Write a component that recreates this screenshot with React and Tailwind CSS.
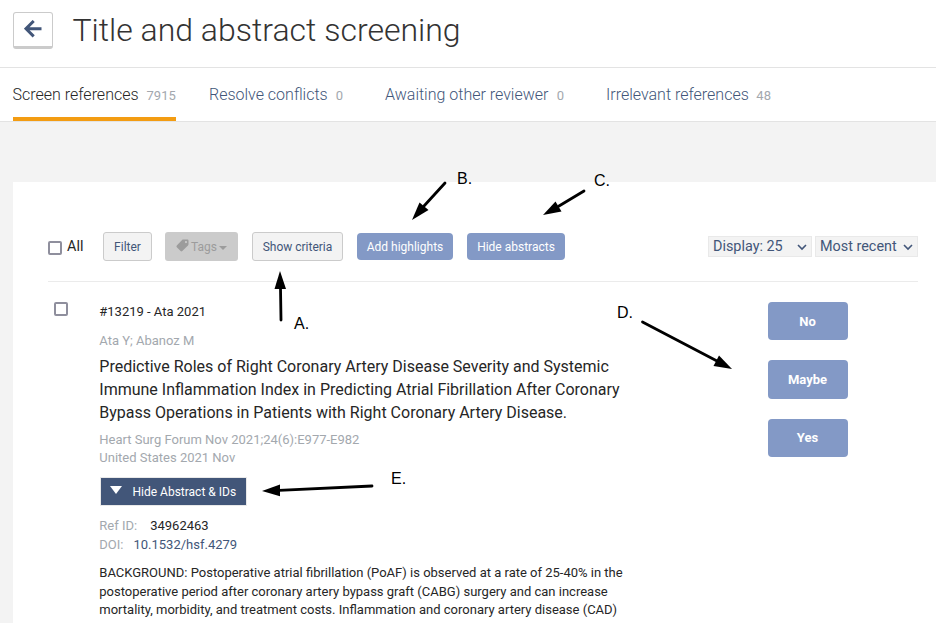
import React from "react";

const tabs = [
  { label: "Screen references", count: "7915", box: "w-[163.3px] mr-[33.2px]", active: true },
  { label: "Resolve conflicts", count: "0", box: "w-[134px] mr-[42px]" },
  { label: "Awaiting other reviewer", count: "0", box: "w-[179px] mr-[42px]" },
  { label: "Irrelevant references", count: "48", box: "w-[165px]" },
];

const notes = [
  { text: "A.", pos: "left-[294px] top-[315px]" },
  { text: "B.", pos: "left-[457px] top-[170px]" },
  { text: "C.", pos: "left-[594px] top-[172px]" },
  { text: "D.", pos: "left-[617px] top-[304px]" },
  { text: "E.", pos: "left-[391px] top-[470px]" },
];

const arrows = [
  { line: "M281 320L280.5 288", head: "280,271 286,289 274.5,289" },
  { line: "M445 183L424 206", head: "412,220 419.5,202.5 428.5,210" },
  { line: "M584 191L559 206", head: "543,215 555.5,201.5 561.5,211.5" },
  { line: "M642.5 322L717 361", head: "732,369 719,355.5 713.5,366" },
  { line: "M372 486L279 490.3", head: "262,491 280,484.5 280,496.3" },
];

function Checkbox({ className }) {
  return <span className={`block size-[14px] shrink-0 rounded-[2px] border-2 border-[#8f8f9d] bg-white ${className}`} />;
}

function Select({ children, className }) {
  return (
    <button className={`flex h-[21px] items-center justify-between border border-[#e9e9e9] bg-[#f3f3f3] pl-1 pr-[4px] text-[14.4px] leading-none text-[#425679] ${className}`}>
      <span className="pt-px">{children}</span>
      <svg width="10" height="8" viewBox="0 0 10 8" fill="none" stroke="currentColor" strokeWidth="1.6">
        <path d="M1 2l4 4 4-4" />
      </svg>
    </button>
  );
}

function Vote({ children, className }) {
  return (
    <button className={`w-20 rounded-[4px] bg-[#8399c6] pr-px text-[13px] font-bold text-white ${className}`}>{children}</button>
  );
}

export default function App() {
  return (
    <div className="relative flex h-[623px] w-[936px] flex-col overflow-hidden bg-[#f3f3f3] font-['Roboto',sans-serif] text-[#262626]">
      <header className="flex h-[68px] shrink-0 items-start border-b border-[#e3e3e3] bg-white pl-[13px] pt-3">
        <button className="flex h-[37px] w-10 justify-center rounded-[3px] border border-b-[3px] border-[#cbcbcb] pt-[7px]">
          <svg width="18" height="18" viewBox="0 0 18 18" fill="none" stroke="#425679" strokeWidth="3">
            <path d="M17.5 8.7H3M9.7 1L2 8.7L9.7 16.4" />
          </svg>
        </button>
        <h1 className="ml-[19.4px] text-[32px] font-light leading-9 text-[#333]">Title and abstract screening</h1>
      </header>

      <nav className="flex h-[54px] shrink-0 border-b border-[#e3e3e3] bg-white pl-[12.5px]">
        {tabs.map((t) => (
          <a key={t.label} className={`flex h-[53px] items-baseline justify-between whitespace-nowrap pt-[15px] text-base font-light ${t.active ? "border-b-4 border-[#f39c12] text-[#262626]" : "text-[#425679]"} ${t.box}`}>
            {t.label}
            <span className="text-[13px] font-normal text-[#a3a8ae]">{t.count}</span>
          </a>
        ))}
      </nav>

      <main className="ml-[13px] mt-[60px] flex-1 bg-white pl-[35px] pr-[18px] pt-[50px]">
        <div className="flex h-[50px] items-start border-b border-[#ebebeb] text-xs">
          <div className="flex w-[55px] items-start pt-[5px]">
            <Checkbox className="mt-1" />
            <span className="ml-[5px] text-[14.4px] leading-5">All</span>
          </div>
          <button className="h-[29px] w-[49px] rounded-[3px] border border-[#cbcbcb] bg-[#f3f3f3] text-[#425679]">Filter</button>
          <button className="ml-[13px] flex h-[29px] w-[73px] items-center justify-center rounded-[3px] bg-[#cbcbcb] text-[#9c9c9c]">
            <svg width="13" height="13" viewBox="0 0 13 13" className="mb-[3px] mr-[2px]" fill="currentColor">
              <path fillRule="evenodd" d="M7.2.6h4.2c.7 0 1.1.5 1.1 1.1v3.6c0 .4-.2.8-.5 1.1L6.3 12c-.6.5-1.2.5-1.7 0L.8 8.2c-.5-.5-.5-1.1 0-1.7L6.1 1c.3-.3.7-.4 1.1-.4zM10 2a1.1 1.1 0 1 0 0 2.2A1.1 1.1 0 0 0 10 2z" />
            </svg>
            <span>Tags</span>
            <span className="ml-[2px] mt-[3px] border-x-4 border-t-4 border-x-transparent border-t-[#9c9c9c]" />
          </button>
          <button className="ml-[14px] h-[29px] w-[91px] rounded-[3px] border border-[#cbcbcb] bg-[#f3f3f3] text-[#425679]">Show criteria</button>
          <button className="ml-[14px] mt-px h-[27px] w-24 rounded-[4px] bg-[#8399c6] text-white">Add highlights</button>
          <button className="ml-[14px] mt-px h-[27px] w-[98px] rounded-[4px] bg-[#8399c6] text-white">Hide abstracts</button>
          <div className="ml-auto flex gap-[3px] pt-1">
            <Select className="w-[104px]">Display: 25</Select>
            <Select className="w-[103px]">Most recent</Select>
          </div>
        </div>

        <article className="flex pt-5">
          <Checkbox className="ml-[6px]" />
          <div className="ml-[31.3px] w-[560px] shrink-0 text-[13px] leading-[18px]">
            <p className="mt-px">#13219 - Ata 2021</p>
            <p className="mt-[11px] text-[#a3a8ae]">Ata Y; Abanoz M</p>
            <h2 className="mt-[5px] whitespace-nowrap text-base leading-[23px]">
              Predictive Roles of Right Coronary Artery Disease Severity and Systemic<br />
              Immune Inflammation Index in Predicting Atrial Fibrillation After Coronary<br />
              Bypass Operations in Patients with Right Coronary Artery Disease.
            </h2>
            <p className="mt-[7px] text-[#a3a8ae]">
              Heart Surg Forum Nov 2021;24(6):E977-E982<br />
              United States 2021 Nov
            </p>
            <button className="ml-[0.7px] mt-[10px] flex h-[29px] w-[147px] items-center border border-[#e9e9e9] bg-[#425679] pl-[9.5px] text-xs text-white">
              <span className="mb-[3px] mr-[10px] border-x-[6.5px] border-t-8 border-x-transparent border-t-white" />
              Hide Abstract &amp; IDs
            </button>
            <p className="mt-[10px] leading-[19px]"><span className="mr-[13px] text-[#a3a8ae]">Ref ID:</span>34962463</p>
            <p className="leading-[19px]"><span className="mr-[10px] text-[#a3a8ae]">DOI:</span><a className="text-[#425679]">10.1532/hsf.4279</a></p>
            <p className="mt-[10px] whitespace-nowrap text-[13px] leading-[18.57px]">
              BACKGROUND: Postoperative atrial fibrillation (PoAF) is observed at a rate of 25-40% in the<br />
              postoperative period after coronary artery bypass graft (CABG) surgery and can increase<br />
              mortality, morbidity, and treatment costs. Inflammation and coronary artery disease (CAD)
            </p>
          </div>
          <div className="ml-auto mr-[70px] flex flex-col gap-5">
            <Vote className="h-[38px] pt-px">No</Vote>
            <Vote className="h-[39px]">Maybe</Vote>
            <Vote className="h-[38px]">Yes</Vote>
          </div>
        </article>
      </main>

      <svg className="pointer-events-none absolute left-0 top-0" width="936" height="623" viewBox="0 0 936 623">
        {arrows.map((a) => (
          <g key={a.head}>
            <path d={a.line} stroke="#000" strokeWidth="2.8" strokeLinecap="round" />
            <polygon points={a.head} fill="#000" />
          </g>
        ))}
      </svg>
      {notes.map((n) => (
        <span key={n.text} className={`absolute font-['Liberation_Sans',sans-serif] text-base leading-[18px] text-black ${n.pos}`}>{n.text}</span>
      ))}
    </div>
  );
}
